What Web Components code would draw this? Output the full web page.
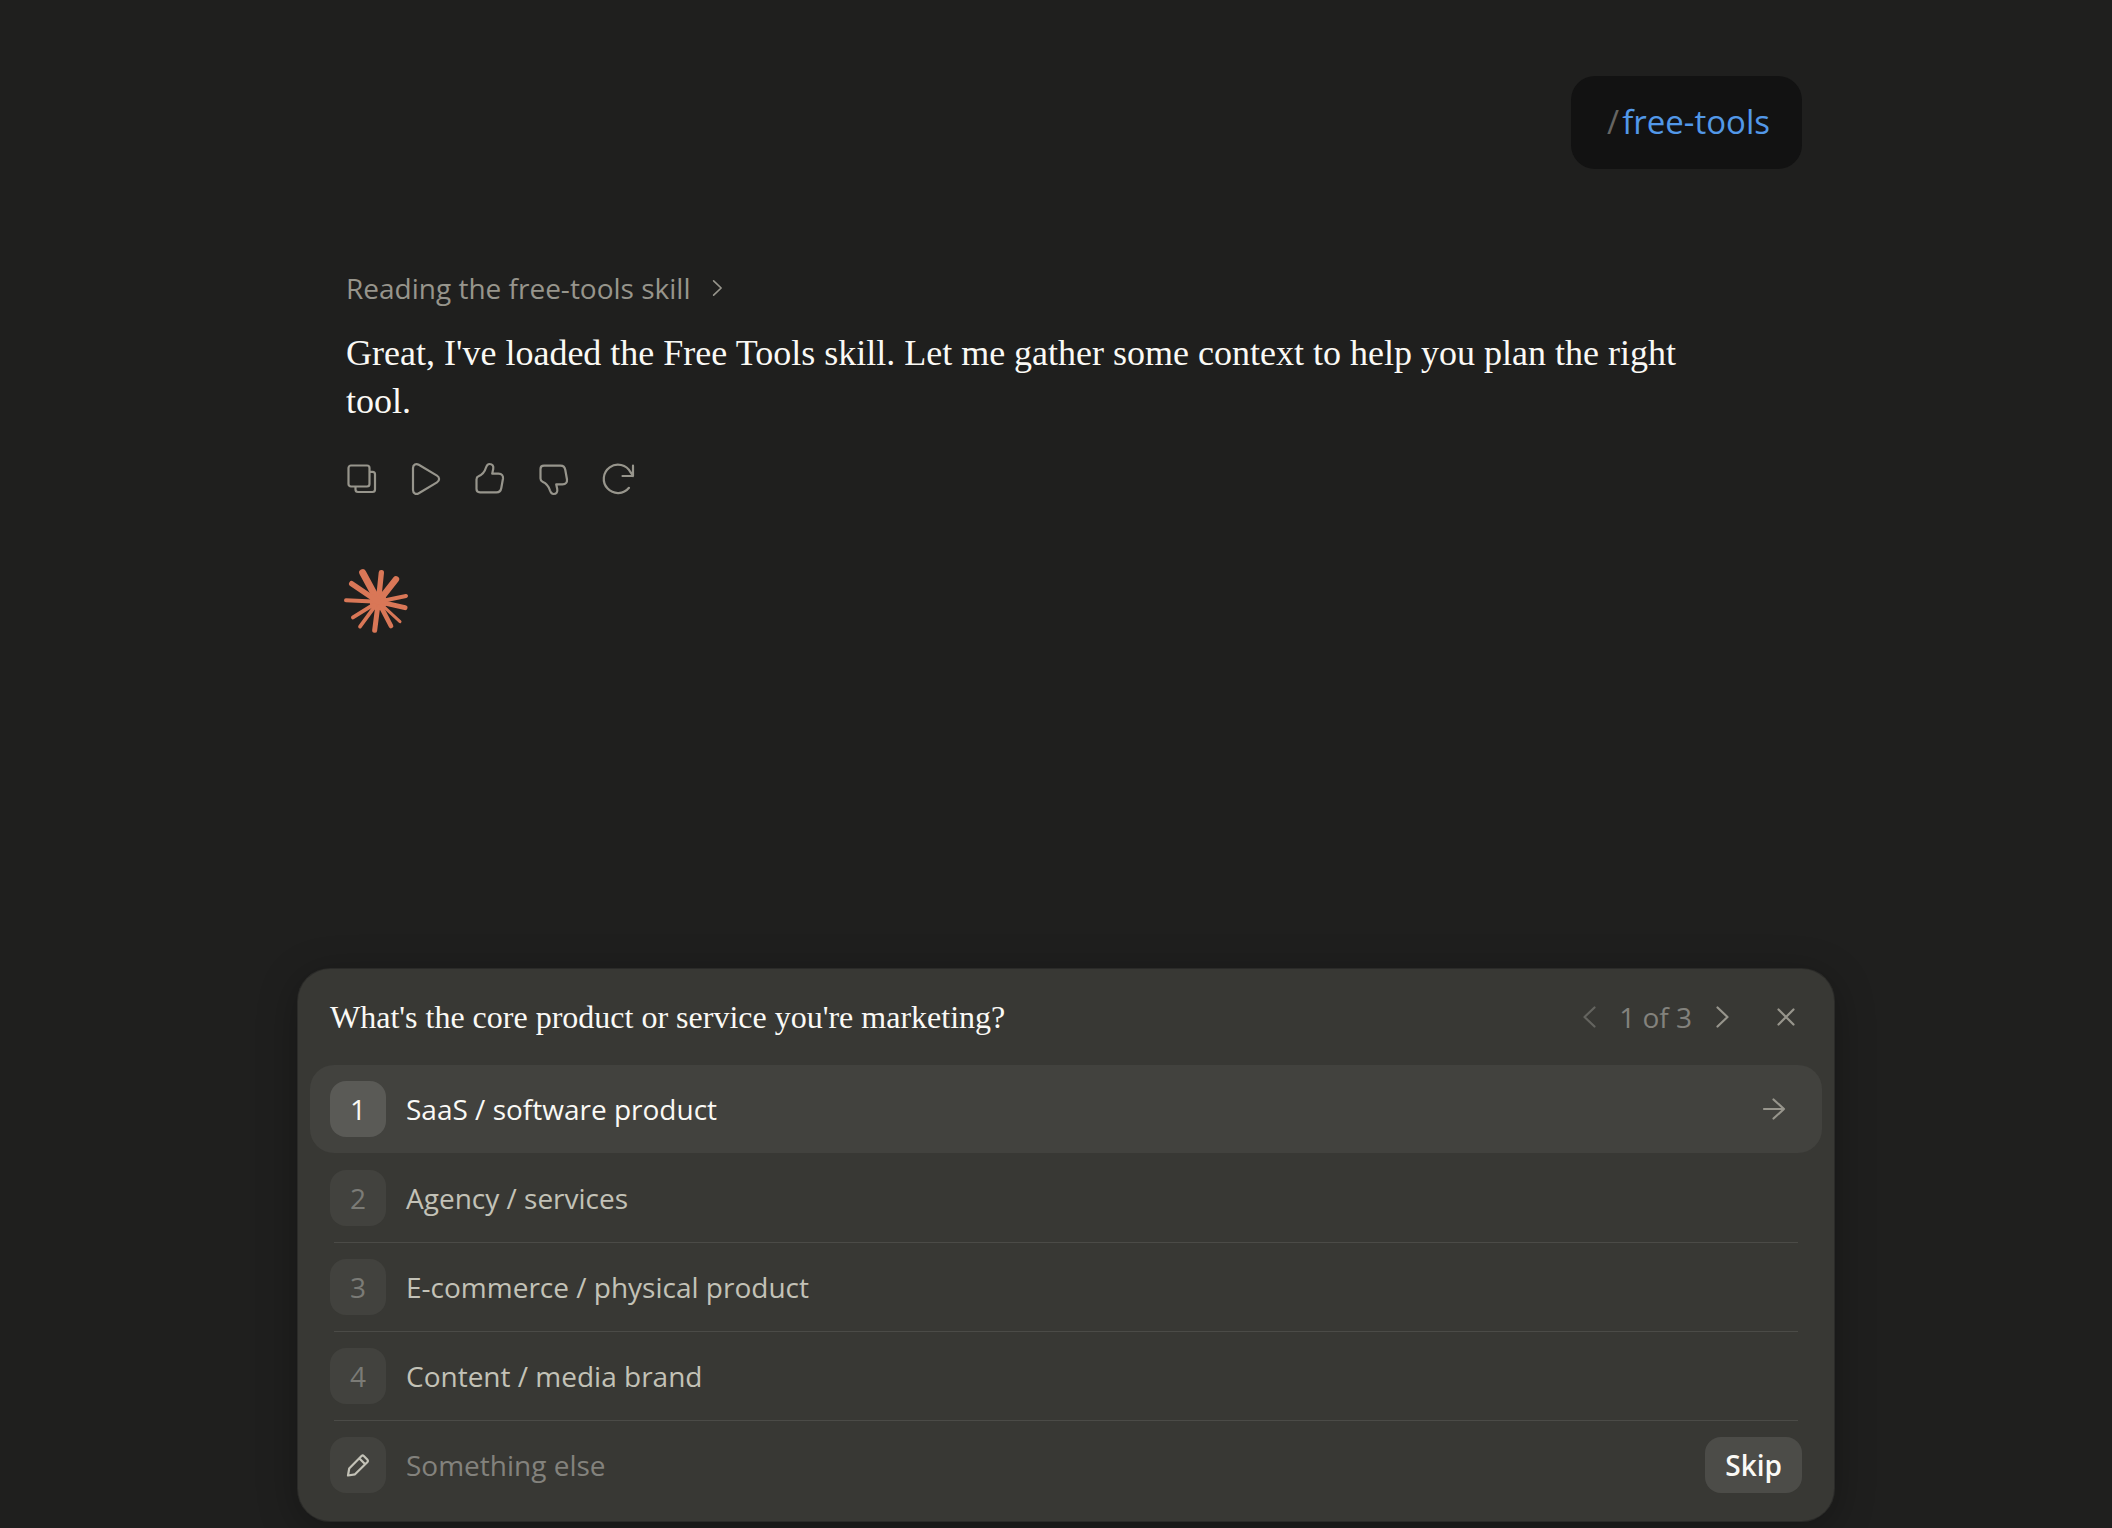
<!DOCTYPE html>
<html lang="en">
<head>
<meta charset="utf-8">
<meta name="viewport" content="width=device-width, initial-scale=1">
<title>Free Tools</title>
<style>
    html {
        --bg: #1f1f1e;
        --bubble: #121212;
        --panel: #383834;
        --raised: #42423e;
        --badge: #5a5a56;
        --line: #4b4b47;
        --text: #faf9f5;
        --text-soft: #c3c2b7;
        --text-muted: #97958c;
        --text-dim: #83827d;
        --accent: #d97757;
        --link: #5298e8;
        --serif: "Liberation Serif", serif;
        --sans: "Open Sans", sans-serif;
        background: var(--bg);
        color: var(--text);
        font-family: var(--sans);
    }

    body {
        margin: 0;
    }
</style>
</head>
<body>
<chat-page>
    <chat-bubble command="free-tools"></chat-bubble>
    <chat-reply status="Reading the free-tools skill">Great, I've loaded the Free Tools skill. Let me gather some context to help you plan the right tool.</chat-reply>
    <spark-logo></spark-logo>
    <question-panel slot="footer" current="1" total="3">
        <span slot="title">What's the core product or service you're marketing?</span>
        <question-option number="1" selected>SaaS / software product</question-option>
        <question-option number="2">Agency / services</question-option>
        <question-option number="3">E-commerce / physical product</question-option>
        <question-option number="4">Content / media brand</question-option>
        <question-other></question-other>
    </question-panel>
</chat-page>

<script>
const THUMB = `<path d="M2.500 16.500q0-2.400 2-3.200C8 11.800 11 8 12 4.500 12.800 2 13.500 1 15.500 1c3 0 4.300 2 3.700 5l-1 4.700h6.300c3.500 0 4.800 2.300 4.500 4.800L27.300 25c-.5 3-2.300 4.300-4.800 4.300H6c-2.500 0-3.500-.8-3.500-3.300z"/>`;

const ICONS = {
    copy: `<rect x="2.500" y="2.500" width="21" height="21" rx="2.500"/><path d="M24 8.800h2.500a2.500 2.500 0 0 1 2.500 2.500V26.500a2.500 2.500 0 0 1-2.500 2.500H12a2.500 2.500 0 0 1-2.500-2.500V24"/>`,
    play: `<path d="M3 5C3 1.600 6 .2 8.800 1.800L27 12.600c2.800 1.700 2.800 5.100 0 6.800L8.800 30.200C6 31.800 3 30.400 3 27z"/>`,
    up: THUMB,
    down: `<g transform="matrix(1 0 0 -1 0 32)">${THUMB}</g>`,
    retry: `<path d="M27 24.800A14.200 14.200 0 1 1 28.500 9.200L31 13M31 2.700V13H20.500"/>`,
    right: `<path d="M11.500 6.500 21.500 16l-10 9.500"/>`,
    left: `<path d="M21.500 6.500 11.500 16l10 9.500"/>`,
    close: `<path d="m8.500 8.500 15 15m0-15-15 15"/>`,
    arrow: `<path d="M6 16h20M15.500 6.500 26 16l-10.500 9.500"/>`,
    pencil: `<path d="M6 26.500 7.200 19.500 19.500 7q1.200-1 2.300 0l3.700 3.700q1 1.200 0 2.300L13 25.300zM17.200 9.300l6 6"/>`
};

class UiIcon extends HTMLElement {

    constructor() {
        super();
        this.shadowDOM = this.attachShadow({mode: "open"});
    }

    connectedCallback() {
        this.render();
    }

    render() {
        this.shadowDOM.innerHTML = `
        <style>
            :host {
                display: block;
                width: 32px;
                height: 32px;
                flex: none;
            }

            svg {
                display: block;
                width: 100%;
                height: 100%;
                fill: none;
                stroke: currentColor;
                stroke-linecap: round;
                stroke-linejoin: round;
                overflow: visible;
            }
        </style>
        <svg viewBox="0 0 32 32" stroke-width="2.2" aria-hidden="true">${ICONS[this.getAttribute("name")]}</svg>
        `;
    }
}

class ChatPage extends HTMLElement {

    constructor() {
        super();
        this.shadowDOM = this.attachShadow({mode: "open"});
    }

    connectedCallback() {
        this.render();
    }

    render() {
        this.shadowDOM.innerHTML = `
        <style>
            :host {
                display: flex;
                flex-direction: column;
                align-items: center;
                box-sizing: border-box;
                min-height: 100vh;
                padding: 76px 0 7px 20px;
            }

            main {
                display: flex;
                flex-direction: column;
                flex: 1;
                box-sizing: border-box;
                width: 100%;
                max-width: 1472px;
                padding-left: 16px;
            }

            footer {
                width: 100%;
                max-width: 1536px;
            }
        </style>
        <main><slot></slot></main>
        <footer><slot name="footer"></slot></footer>
        `;
    }
}

class ChatBubble extends HTMLElement {

    constructor() {
        super();
        this.shadowDOM = this.attachShadow({mode: "open"});
    }

    connectedCallback() {
        this.render();
    }

    render() {
        this.shadowDOM.innerHTML = `
        <style>
            :host {
                display: block;
                align-self: flex-end;
                padding: 22px 32px 23px 36px;
                border-radius: 24px;
                background: var(--bubble);
                font-size: 33px;
                line-height: 48px;
            }

            p {
                display: flex;
                gap: 3px;
                margin: 0;
                color: var(--link);
            }

            .slash {
                color: #666562;
            }
        </style>
        <p><span class="slash">/</span><span>${this.getAttribute("command")}</span></p>
        `;
    }
}

class ChatReply extends HTMLElement {

    constructor() {
        super();
        this.shadowDOM = this.attachShadow({mode: "open"});
    }

    connectedCallback() {
        this.render();
    }

    render() {
        this.shadowDOM.innerHTML = `
        <style>
            :host {
                display: block;
                margin-top: 99px;
            }

            button {
                display: flex;
                align-items: center;
                padding: 0;
                border: 0;
                background: none;
                color: var(--text-muted);
                font: inherit;
                cursor: pointer;
            }

            .status {
                gap: 14px;
                font-size: 28px;
                line-height: 40px;
            }

            .status ui-icon {
                width: 24px;
                height: 24px;
            }

            p {
                margin: 21px 0 0;
                padding-right: 64px;
                font-family: var(--serif);
                font-size: 36px;
                line-height: 48px;
            }

            .actions {
                display: flex;
                margin: 22px -16px 0;
            }

            .actions button {
                justify-content: center;
                width: 64px;
                height: 64px;
            }
        </style>
        <button class="status" type="button">${this.getAttribute("status")}<ui-icon name="right"></ui-icon></button>
        <p><slot></slot></p>
        <div class="actions">
            <button type="button" aria-label="Copy"><ui-icon name="copy"></ui-icon></button>
            <button type="button" aria-label="Read aloud"><ui-icon name="play"></ui-icon></button>
            <button type="button" aria-label="Good response"><ui-icon name="up"></ui-icon></button>
            <button type="button" aria-label="Bad response"><ui-icon name="down"></ui-icon></button>
            <button type="button" aria-label="Retry"><ui-icon name="retry"></ui-icon></button>
        </div>
        `;
    }
}

class SparkLogo extends HTMLElement {

    constructor() {
        super();
        this.shadowDOM = this.attachShadow({mode: "open"});
    }

    connectedCallback() {
        this.render();
    }

    render() {
        // tip x, tip y, thickness of each ray
        const rays = [
            [56, 11, 21], [112, 11, 16], [156, 31, 19], [186, 81, 12],
            [183, 116, 15], [168, 158, 9], [141, 171, 14], [92, 184, 15],
            [48, 173, 11], [27, 145, 12], [6, 94, 12], [23, 44, 16]
        ];

        this.shadowDOM.innerHTML = `
        <style>
            :host {
                display: block;
                width: 64px;
                height: 64px;
                margin: 58px 0 48px -2px;
                color: var(--accent);
            }

            svg {
                display: block;
                stroke: currentColor;
                fill: currentColor;
                stroke-linecap: round;
                overflow: visible;
            }
        </style>
        <svg viewBox="0 0 192 192" aria-hidden="true">
            <circle cx="103" cy="98" r="26" stroke="none"/>
            ${rays.map(([x, y, w]) => `<path d="M103 98 ${x} ${y}" stroke-width="${w}"/>`).join("")}
        </svg>
        `;
    }
}

class QuestionPanel extends HTMLElement {

    constructor() {
        super();
        this.shadowDOM = this.attachShadow({mode: "open"});
    }

    connectedCallback() {
        this.render();
    }

    render() {
        this.shadowDOM.innerHTML = `
        <style>
            :host {
                display: block;
                box-sizing: border-box;
                padding: 0 12px 12px;
                border-radius: 32px;
                background: var(--panel);
                box-shadow: 0 0 0 1px #2b2b29, 0 8px 40px rgba(0, 0, 0, 0.3);
            }

            header {
                display: flex;
                align-items: center;
                height: 96px;
                padding: 0 20px;
            }

            h2 {
                flex: 1;
                margin: 0;
                font-family: var(--serif);
                font-size: 32px;
                font-weight: 400;
                line-height: 40px;
            }

            nav {
                display: flex;
                align-items: center;
                gap: 14px;
                color: var(--text-dim);
                font-size: 28px;
                line-height: 40px;
            }

            button {
                padding: 0;
                border: 0;
                background: none;
                color: var(--text-muted);
                cursor: pointer;
            }

            button:disabled {
                color: #64645f;
            }

            .close {
                margin-left: 32px;
            }
        </style>
        <header>
            <h2><slot name="title"></slot></h2>
            <nav>
                <button type="button" aria-label="Previous question" disabled><ui-icon name="left"></ui-icon></button>
                <span>${this.getAttribute("current")} of ${this.getAttribute("total")}</span>
                <button type="button" aria-label="Next question"><ui-icon name="right"></ui-icon></button>
            </nav>
            <button class="close" type="button" aria-label="Close"><ui-icon name="close"></ui-icon></button>
        </header>
        <slot></slot>
        `;
    }
}

class QuestionOption extends HTMLElement {

    constructor() {
        super();
        this.shadowDOM = this.attachShadow({mode: "open"});
    }

    connectedCallback() {
        this.render();
    }

    render() {
        const selected = this.hasAttribute("selected");

        this.shadowDOM.innerHTML = `
        <style>
            :host {
                display: block;
                color: var(--text-soft);
            }

            :host([selected]) {
                color: var(--text);
            }

            button {
                display: flex;
                align-items: center;
                gap: 20px;
                width: 100%;
                height: 88px;
                padding: 0 20px;
                border: 0;
                border-radius: 24px;
                background: none;
                color: inherit;
                font: inherit;
                font-size: 28px;
                line-height: 40px;
                text-align: left;
                cursor: pointer;
            }

            .number {
                display: grid;
                place-items: center;
                width: 56px;
                height: 56px;
                border-radius: 16px;
                background: var(--raised);
                color: #7b7b76;
            }

            .label {
                flex: 1;
            }

            hr {
                height: 1px;
                margin: 0 24px;
                border: 0;
                background: var(--line);
            }

            ui-icon {
                color: var(--text-muted);
                margin-right: 12px;
            }

            :host([selected]) button {
                background: var(--raised);
            }

            :host([selected]) .number {
                background: var(--badge);
                color: var(--text);
            }

            :host([selected]) hr {
                background: none;
            }
        </style>
        <button type="button">
            <span class="number">${this.getAttribute("number")}</span>
            <span class="label"><slot></slot></span>
            ${selected ? `<ui-icon name="arrow"></ui-icon>` : ""}
        </button>
        <hr>
        `;
    }
}

class QuestionOther extends HTMLElement {

    constructor() {
        super();
        this.shadowDOM = this.attachShadow({mode: "open"});
    }

    connectedCallback() {
        this.render();
    }

    render() {
        this.shadowDOM.innerHTML = `
        <style>
            :host {
                display: flex;
                align-items: center;
                gap: 20px;
                height: 88px;
                padding: 0 20px;
                font-size: 28px;
            }

            label {
                display: grid;
                place-items: center;
                width: 56px;
                height: 56px;
                border-radius: 16px;
                background: var(--raised);
                color: var(--text-soft);
            }

            input {
                flex: 1;
                min-width: 0;
                padding: 0;
                border: 0;
                outline: 0;
                background: none;
                color: var(--text);
                font: inherit;
                line-height: 40px;
            }

            input::placeholder {
                color: var(--text-dim);
                opacity: 1;
            }

            button {
                height: 56px;
                padding: 0 20px;
                border: 0;
                border-radius: 16px;
                background: #4c4c48;
                color: var(--text);
                font: inherit;
                font-weight: 600;
                cursor: pointer;
            }
        </style>
        <label for="other" aria-label="Something else"><ui-icon name="pencil"></ui-icon></label>
        <input id="other" type="text" placeholder="Something else">
        <button type="button">Skip</button>
        `;
    }
}

customElements.define("ui-icon", UiIcon);
customElements.define("chat-page", ChatPage);
customElements.define("chat-bubble", ChatBubble);
customElements.define("chat-reply", ChatReply);
customElements.define("spark-logo", SparkLogo);
customElements.define("question-panel", QuestionPanel);
customElements.define("question-option", QuestionOption);
customElements.define("question-other", QuestionOther);
</script>
</body>
</html>
